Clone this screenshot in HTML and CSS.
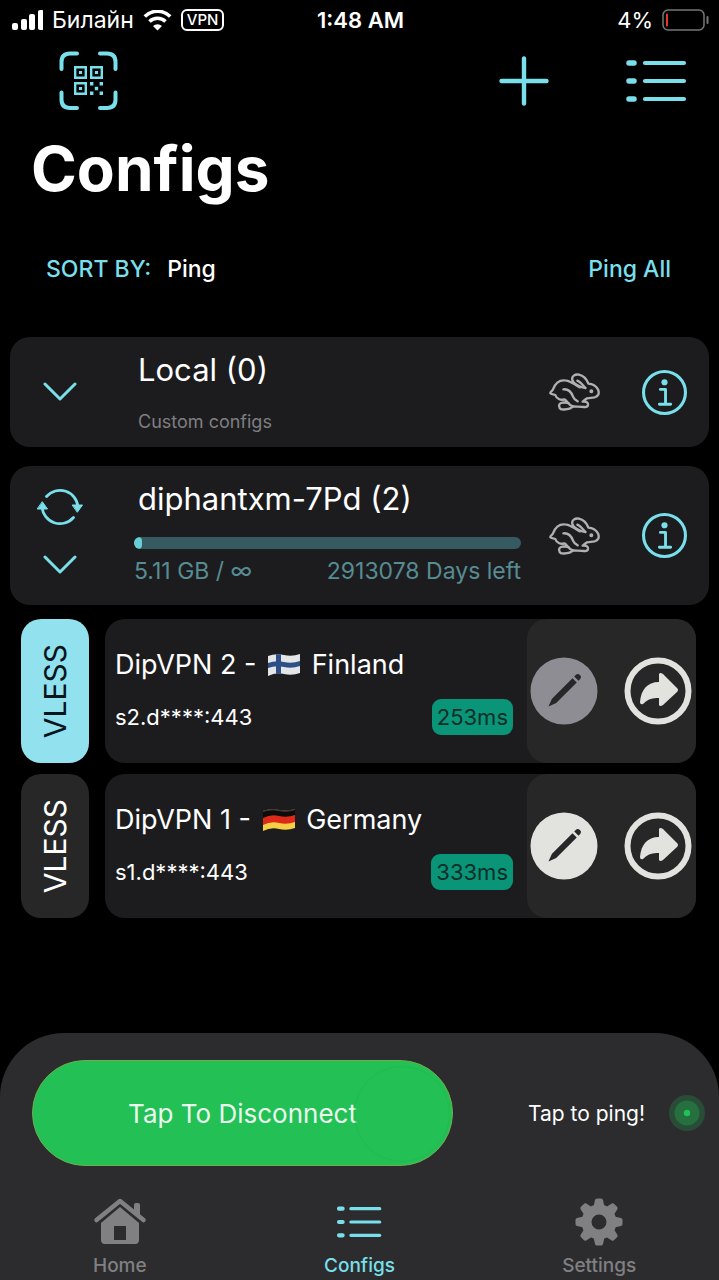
FILE: index.html
```html
<!DOCTYPE html>
<html lang="en">
<head>
<meta charset="utf-8">
<meta name="viewport" content="width=device-width, initial-scale=1">
<title>Configs</title>
<link rel="stylesheet" href="styles.css">
</head>
<body>
<svg class="symbols" aria-hidden="true">
  <symbol id="list" viewBox="0 0 62 44">
    <path d="M4 4h5M4 22h5M4 40h5" stroke-width="5.500"/>
    <path d="M20 4h39M20 22h39M20 40h39" stroke-width="4.200"/>
  </symbol>
  <symbol id="chevron" viewBox="0 0 34 20"><path d="M2 2l15 15L32 2" stroke-width="3"/></symbol>
  <symbol id="rabbit" viewBox="118 147 153 114">
    <path d="M227 192C210 190 190 178 188 168C185 156 196 150 208 152C222 155 231 166 236 179C250 180 259 186 265 196C270 208 266 217 255 220L232 223C225 226 223 231 219 233C230 231 236 236 235 243C234 249 230 250 223 249C210 248 200 247 190 247C182 257 165 257 155 256C146 252 146 240 154 237C163 234 170 236 175 237C171 232 169 228 164 226C153 230 140 224 137 213C134 210 124 212 122 208C121 203 129 201 130 196C137 177 150 168 165 169C183 169 196 184 211 190"/>
    <path d="M227 192C219 183 211 173 203 170"/>
    <path d="M161 196C180 194 186 207 190 218C193 226 199 229 204 232M176 237C180 243 185 246 190 247"/>
    <circle cx="245" cy="202" r="2.5" fill="currentColor"/>
  </symbol>
  <symbol id="info" viewBox="0 0 44 44">
    <circle cx="22" cy="22" r="20.500" stroke-width="3"/>
    <circle cx="22" cy="12" r="3" fill="currentColor" stroke="none"/>
    <path d="M18 19h5v14M17 33.500h11" stroke-width="2.800"/>
  </symbol>
  <symbol id="pencil" viewBox="0 0 68 68">
    <circle cx="34" cy="34" r="33.500" fill="currentColor" stroke="none"/>
    <g fill="#27272a" stroke="none" transform="rotate(45 34 34)"><path d="M31 19h6v29l-3 8-3-8z"/><path d="M31 16.500v-2a3 3 0 0 1 6 0v2z"/></g>
  </symbol>
  <symbol id="share" viewBox="0 0 68 68">
    <circle cx="34" cy="34" r="30.500" stroke-width="6"/>
    <path d="M35 17q1-2 4 0l14 14q2 2 0 4L39 48q-3 2-4 0v-7q-10-1-16 6-3 1-3-2c1-12 7-20 19-20z" fill="currentColor" stroke="none"/>
  </symbol>
</svg>

<header>
  <div class="status">
    <div class="status-left">
      <svg width="31" height="20" viewBox="0 0 31 20" class="solid"><rect y="13" width="6" height="7" rx="2"/><rect x="9" y="9" width="6" height="11" rx="2"/><rect x="17" y="4" width="6" height="16" rx="2"/><rect x="26" width="6" height="20" rx="2"/></svg>
      <span>Билайн</span>
      <svg width="29" height="21" viewBox="0 0 29 21" class="wifi"><path d="M1.800 6.500a18 18 0 0 1 25.400 0M6.500 11.500a11.500 11.500 0 0 1 16 0" stroke-width="3.600"/><path d="M14.500 20.500l-4.500-4.500a6.500 6.500 0 0 1 9 0z" fill="currentColor" stroke="none"/></svg>
      <span class="vpn">VPN</span>
    </div>
    <time>1:48 AM</time>
    <div class="status-right">
      <span>4%</span>
      <svg width="47" height="22" viewBox="0 0 47 22"><rect x="1" y="1" width="41" height="20" rx="5" stroke="#77777a" stroke-width="1.500"/><path d="M45.500 8v6" stroke="#77777a" stroke-width="2"/><path d="M5 5.500v11" stroke="#e5352f" stroke-width="2"/></svg>
    </div>
  </div>
  <div class="toolbar">
    <button aria-label="Scan QR code"><svg width="60" height="60" viewBox="0 0 60 60">
      <path d="M18 2.500h-7Q2.500 2.500 2.500 11v7M41 2.500h7q8.500 0 8.500 8.500v7M18 57h-7Q2.500 57 2.500 48.500v-7M41 57h7q8.500 0 8.500-8.500v-7" stroke-width="4"/>
      <path d="M16.200 16.200h10.600v10.600H16.200zM32.200 16.200h10.600v10.600H32.200zM16.200 32.200h10.600v10.600H16.200z" stroke-width="2.400" stroke-linejoin="miter"/>
      <path fill="currentColor" stroke="none" d="M19.900 19.900h3.200v3.200h-3.200zM35.900 19.900h3.200v3.200h-3.200zM19.900 35.900h3.200v3.200h-3.200zM31 31h3.400v3.400H31zM40.600 31H44v3.400h-3.400zM35.800 35.800h3.400v3.400h-3.400zM31 40.600h3.400V44H31zM40.600 40.600H44V44h-3.400z"/>
    </svg></button>
    <div class="toolbar-end">
      <button aria-label="Add config"><svg width="50" height="50" viewBox="0 0 50 50"><path d="M25 2.500v45M2.500 25h45" stroke-width="4.400"/></svg></button>
      <button aria-label="List options"><svg width="62" height="44"><use href="#list"/></svg></button>
    </div>
  </div>
  <h1>Configs</h1>
  <div class="sort">
    <label for="sort">SORT BY:</label>
    <select id="sort"><option>Ping</option></select>
    <button class="ping-all">Ping All</button>
  </div>
</header>

<main>
  <section class="group">
    <div class="group-controls">
      <button aria-label="Expand Local"><svg width="34" height="20"><use href="#chevron"/></svg></button>
    </div>
    <div class="group-body">
      <h2>Local (0)</h2>
      <p class="note">Custom configs</p>
    </div>
    <button class="rabbit" aria-label="Ping Local"><svg width="51" height="38"><use href="#rabbit"/></svg></button>
    <button aria-label="About Local"><svg width="45" height="45"><use href="#info"/></svg></button>
  </section>

  <section class="group subscription">
    <div class="group-controls">
      <button aria-label="Refresh"><svg width="46" height="40" viewBox="0 0 46 40">
        <path d="M9.500 9.500A18 18 0 0 1 41 20M36.500 30.500A18 18 0 0 1 5 20" stroke-width="2.800"/>
        <path d="M35.500 18h10l-5 7zM.500 22h10l-5-7z" fill="currentColor" stroke-width="1"/>
      </svg></button>
      <button aria-label="Expand diphantxm-7Pd"><svg width="34" height="20"><use href="#chevron"/></svg></button>
    </div>
    <div class="group-body">
      <h2>diphantxm-7Pd (2)</h2>
      <progress max="100" value="2" aria-label="Traffic used"></progress>
      <p class="usage"><span>5.11 GB / ∞</span><span>2913078 Days left</span></p>
    </div>
    <button class="rabbit" aria-label="Ping diphantxm-7Pd"><svg width="51" height="38"><use href="#rabbit"/></svg></button>
    <button aria-label="About diphantxm-7Pd"><svg width="45" height="45"><use href="#info"/></svg></button>
  </section>

  <ul class="configs">
    <li>
      <span class="protocol selected"><span>VLESS</span></span>
      <article>
        <div class="config-body">
          <h3>DipVPN 2 - <svg class="flag" width="34" height="26" viewBox="0 0 34 26" role="img" aria-label="Finland flag"><path d="M1 4q8-3 16-1t16-1v19q-8 3-16 1T1 24z" fill="#e4e5e8"/><path d="M9 2.300q2.500-.3 5 .2v19q-2.500-.3-5 .3z" fill="#2d4f86"/><path d="M1 11q8-3 16-1t16-1v5q-8 3-16 1T1 16z" fill="#2d4f86"/></svg> Finland</h3>
          <div class="host"><span>s2.d****:443</span><span class="ping">253ms</span></div>
        </div>
        <div class="actions">
          <button class="muted" aria-label="Edit DipVPN 2"><svg width="68" height="68"><use href="#pencil"/></svg></button>
          <button aria-label="Share DipVPN 2"><svg width="68" height="68"><use href="#share"/></svg></button>
        </div>
      </article>
    </li>
    <li>
      <span class="protocol"><span>VLESS</span></span>
      <article>
        <div class="config-body">
          <h3>DipVPN 1 - <svg class="flag" width="34" height="26" viewBox="0 0 34 26" role="img" aria-label="Germany flag"><path d="M1 4q8-3 16-1t16-1v19q-8 3-16 1T1 24z" fill="#f7cf45"/><path d="M1 4q8-3 16-1t16-1v13q-8 3-16 1T1 18z" fill="#dd2a18"/><path d="M1 4q8-3 16-1t16-1v6q-8 3-16 1T1 11z" fill="#0c0c0c"/><path d="M1 4q8-3 16-1t16-1v1q-8 3-16 1T1 5z" fill="#444"/></svg> Germany</h3>
          <div class="host"><span>s1.d****:443</span><span class="ping">333ms</span></div>
        </div>
        <div class="actions">
          <button aria-label="Edit DipVPN 1"><svg width="68" height="68"><use href="#pencil"/></svg></button>
          <button aria-label="Share DipVPN 1"><svg width="68" height="68"><use href="#share"/></svg></button>
        </div>
      </article>
    </li>
  </ul>
</main>

<footer>
  <div class="connection">
    <button class="disconnect">Tap To Disconnect</button>
    <button class="tap-ping">Tap to ping!<svg width="36" height="36" viewBox="0 0 36 36"><g fill="#22c055" stroke="none"><circle cx="18" cy="18" r="18" opacity=".22"/><circle cx="18" cy="18" r="12.500" opacity=".3"/><circle cx="18" cy="18" r="3.200"/></g></svg></button>
  </div>
  <nav>
    <a href="#home"><svg width="54" height="48" viewBox="0 0 54 48"><path d="M3.500 22L27 3l23.500 19" stroke-width="4.500"/><path d="M41 13V7q0-2 2-2h2q2 0 2 2v12z" fill="currentColor" stroke="none"/><path fill-rule="evenodd" d="M27 9l19 16v17q0 4-4 4H12q-4 0-4-4V25zM21 28v14h12V28z" fill="currentColor" stroke="none"/></svg>Home</a>
    <a href="#configs" class="current" aria-current="page"><svg width="46" height="48" viewBox="0 0 62 44"><use href="#list" width="62" height="44"/></svg>Configs</a>
    <a href="#settings"><svg width="48" height="48" viewBox="0 0 48 48"><g fill="currentColor" stroke="none"><path id="cog" d="M20 2q.5-1.500 2-1.500h4q1.500 0 2 1.500l2 9H18zM20 46q.5 1.500 2 1.500h4q1.500 0 2-1.500l2-9H18z"/><use href="#cog" transform="rotate(45 24 24)"/><use href="#cog" transform="rotate(90 24 24)"/><use href="#cog" transform="rotate(135 24 24)"/></g><circle cx="24" cy="24" r="12.500" stroke-width="10"/></svg>Settings</a>
  </nav>
</footer>
</body>
</html>
```
FILE: styles.css
```css
* { box-sizing: border-box; }

body {
  margin: 0;
  min-height: 100vh;
  display: flex;
  flex-direction: column;
  background: #000;
  color: #fff;
  font-family: Inter, "Liberation Sans", sans-serif;
  font-size: 22px;
}

.symbols { position: absolute; width: 0; height: 0; }

svg {
  display: block;
  flex: none;
  fill: none;
  stroke: currentColor;
  stroke-linecap: round;
  stroke-linejoin: round;
}
.solid, .flag { fill: currentColor; stroke: none; }

button, select {
  margin: 0;
  padding: 0;
  border: 0;
  background: none;
  color: #78dfeb;
  font: inherit;
  appearance: none;
  cursor: pointer;
}

h1, h2, h3, p, ul { margin: 0; padding: 0; font-weight: 400; }

/* Status bar */
.status {
  display: grid;
  grid-template-columns: 1fr auto 1fr;
  align-items: center;
  height: 40px;
  padding: 0 10px 0 12px;
}
.status time { font-weight: 600; }
.status-left, .status-right { display: flex; align-items: center; gap: 9px; }
.status-left { font-size: 23px; }
.status-right { justify-content: flex-end; }
.wifi { stroke-linecap: butt; }
.vpn {
  padding: 0 4px;
  border: 2px solid #fff;
  border-radius: 6px;
  font-size: 15px;
  font-weight: 500;
  line-height: 18px;
}

/* Header */
.toolbar {
  display: flex;
  align-items: center;
  justify-content: space-between;
  height: 82px;
  padding: 0 32px 0 59px;
}
.toolbar-end { display: flex; align-items: center; gap: 76px; }
h1 {
  padding: 7px 31px 0;
  font-size: 62px;
  font-weight: 700;
  line-height: 80px;
}
.sort {
  display: flex;
  align-items: center;
  gap: 16px;
  padding: 44px 48px 52px 46px;
  font-size: 23px;
  font-weight: 500;
  line-height: 32px;
}
.sort label { color: #78dfeb; }
.sort select { color: #fff; }
.ping-all { margin-left: auto; }

/* Groups */
main { flex: 1; padding: 0 10px; }
.group {
  display: flex;
  align-items: center;
  min-height: 110px;
  padding-right: 22px;
  border-radius: 20px;
  background: #1c1c1e;
}
.group + .group { margin-top: 19px; }
.subscription { min-height: 139px; }
.group-controls {
  display: flex;
  flex-direction: column;
  align-items: center;
  gap: 28px;
  width: 99px;
}
.subscription .group-controls { padding-bottom: 10px; }
.group-body { flex: 1; margin: 0 28px 0 25px; }
.rabbit { margin-right: 42px; color: #b0b0b2; }
.rabbit svg { stroke-width: 7px; }
h2 { padding-left: 4px; font-size: 31px; line-height: 40px; }
.note {
  padding: 20px 0 0 4px;
  color: #7f7f82;
  font-size: 18px;
  line-height: 24px;
}
progress {
  display: block;
  width: 100%;
  height: 12px;
  margin: 18px 0 6px;
  border: 0;
  border-radius: 6px;
  overflow: hidden;
  background: #365a61;
  appearance: none;
}
progress::-webkit-progress-bar { background: #365a61; }
progress::-webkit-progress-value { border-radius: 4px; background: #69ced5; }
.usage {
  display: flex;
  justify-content: space-between;
  padding-bottom: 6px;
  color: #578c94;
  font-size: 23px;
  line-height: 32px;
}

/* Config rows */
.configs {
  display: grid;
  gap: 11px;
  margin: 14px 13px 24px 11px;
  list-style: none;
}
.configs li { display: flex; gap: 16px; min-height: 144px; }
.protocol {
  display: grid;
  place-items: center;
  width: 68px;
  border-radius: 20px;
  background: #272728;
  font-size: 30px;
}
.protocol span { writing-mode: vertical-rl; transform: rotate(180deg); }
.protocol.selected { background: #92e1ef; color: #07151c; }
article {
  display: flex;
  flex: 1;
  border-radius: 20px;
  background: #1c1c1e;
}
.config-body { flex: 1; padding: 26px 14px 0 10px; }
h3 { font-size: 27px; line-height: 40px; }
.flag { display: inline-block; margin: 0 3px; vertical-align: -4px; }
.host {
  display: flex;
  align-items: center;
  justify-content: space-between;
  margin-top: 14px;
}
.ping {
  padding: 0 5px;
  border-radius: 9px;
  background: #0a9579;
  color: #0b2e28;
  line-height: 36px;
}
.actions {
  display: flex;
  align-items: center;
  gap: 26px;
  padding: 0 4px 0 3px;
  border-radius: 20px;
  background: #272728;
}
.actions button { color: #e2e2df; }
.actions .muted { color: #8e8d94; }

/* Bottom panel */
footer {
  padding: 27px 0 1px;
  border-radius: 64px 64px 0 0;
  background: #2c2c2e;
}
.connection { display: flex; gap: 75px; padding: 0 14px 0 32px; }
.disconnect {
  position: relative;
  flex: 1;
  height: 106px;
  border: 1px solid #6fae4c;
  border-radius: 53px;
  background: #22c055;
  color: #eafbee;
  font-size: 26px;
}
.disconnect::after {
  content: "";
  position: absolute;
  top: 5px;
  right: 2px;
  width: 94px;
  height: 94px;
  border: 1px solid #20b850;
  border-radius: 50%;
  background: #22c055;
  opacity: .6;
}
.tap-ping {
  display: flex;
  align-items: center;
  gap: 24px;
  color: #fff;
  font-size: 21px;
}
nav { display: grid; grid-template-columns: repeat(3, 1fr); padding-top: 32px; }
nav a {
  display: flex;
  flex-direction: column;
  align-items: center;
  gap: 7px;
  color: #808082;
  font-size: 19px;
  font-weight: 500;
  line-height: 26px;
  text-decoration: none;
}
nav .current { color: #78dfeb; }
```
